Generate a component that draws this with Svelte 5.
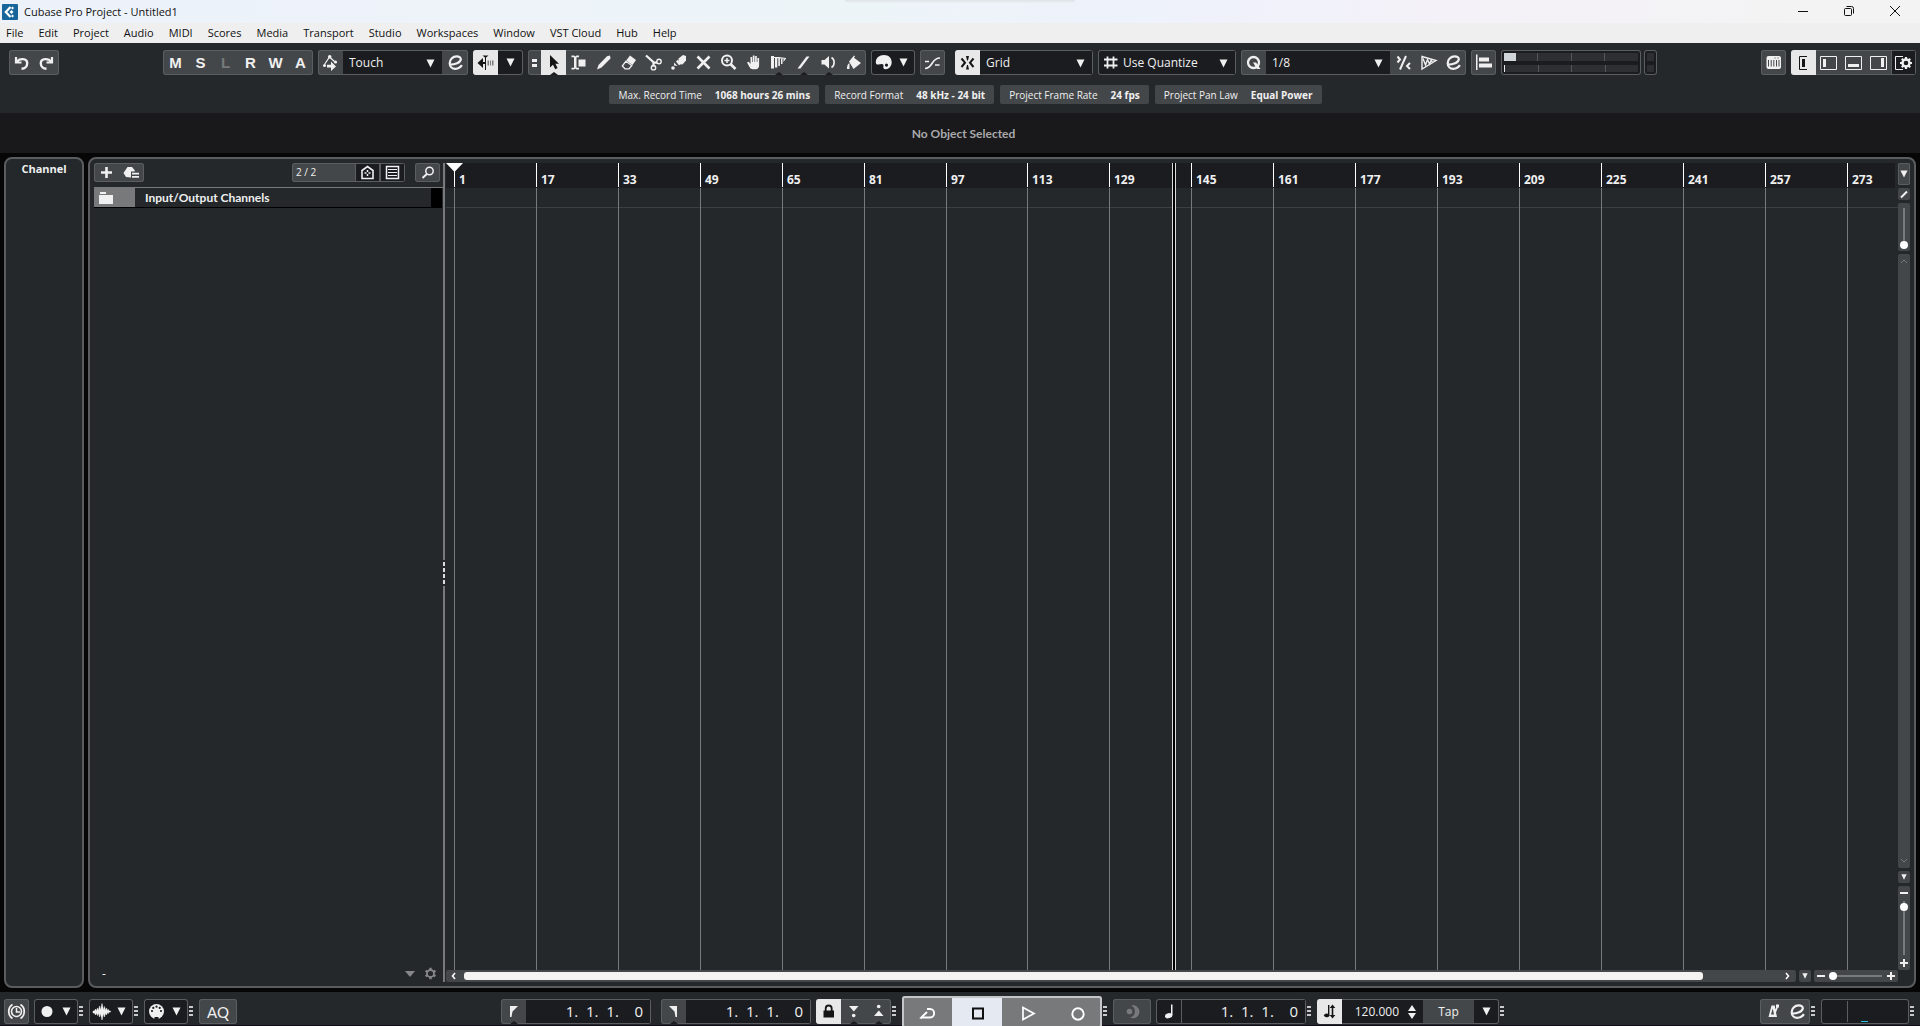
<script>
	const menus = ['File', 'Edit', 'Project', 'Audio', 'MIDI', 'Scores', 'Media', 'Transport', 'Studio', 'Workspaces', 'Window', 'VST Cloud', 'Hub', 'Help'];

	const tools = [
		{ icon: 'select', label: 'Object Selection', more: true },
		{ icon: 'range', label: 'Range Selection' },
		{ icon: 'draw', label: 'Draw' },
		{ icon: 'erase', label: 'Erase' },
		{ icon: 'split', label: 'Split' },
		{ icon: 'glue', label: 'Glue' },
		{ icon: 'mute', label: 'Mute' },
		{ icon: 'zoom', label: 'Zoom' },
		{ icon: 'hand', label: 'Hand' },
		{ icon: 'warp', label: 'Time Warp', more: true },
		{ icon: 'line', label: 'Line', more: true },
		{ icon: 'play', label: 'Play', more: true },
		{ icon: 'bucket', label: 'Color' }
	];

	const info = [
		['Max. Record Time', '1068 hours 26 mins'],
		['Record Format', '48 kHz - 24 bit'],
		['Project Frame Rate', '24 fps'],
		['Project Pan Law', 'Equal Power']
	];

	// all icons are drawn on a 25 x 25 grid
	const icons = {
		undo: '<path d="M7 7v5.500h5.500" fill="none" stroke="currentColor" stroke-width="2.200"/><path d="M7.800 12C10 8.400 18.200 7.600 18.200 13.400c0 3.400-2.700 5.200-5.700 5.300" fill="none" stroke="currentColor" stroke-width="2.400"/>',
		redo: '<g transform="translate(25 0) scale(-1 1)"><path d="M7 7v5.500h5.500" fill="none" stroke="currentColor" stroke-width="2.200"/><path d="M7.800 12C10 8.400 18.200 7.600 18.200 13.400c0 3.400-2.700 5.200-5.700 5.300" fill="none" stroke="currentColor" stroke-width="2.400"/></g>',
		auto: '<path d="M6.500 14.500 11.500 7 17 12" fill="none" stroke="currentColor" stroke-width="1.200"/><circle cx="6.500" cy="15.500" r="1.500"/><circle cx="11.700" cy="6.800" r="1.800"/><circle cx="17.500" cy="12" r="1.600"/><path d="M9 14.700h4v-3.200l5 5-5 4.500v-3.500H9z"/>',
		e: '<path d="M7 14.700c5-.2 10.300-2 10.800-5.200C18 7.300 16 6.300 13.700 6.300 9.500 6.300 6.700 9.700 6.700 13.200c0 3.400 2.300 5.600 5.700 5.600 2.700 0 5-1.300 6.500-3.600" fill="none" stroke="currentColor" stroke-width="2.200"/>',
		scroll: '<path d="M4.500 13 10 8v10zM9 12h3v2H9zM9.500 5.500h6L12.500 8z"/><path d="M12 6h1v14h-1z"/><path d="M14.500 10.500H16v5h-1.500zM17 10.500h1v5h-1zM19 10.500h1.500v5H19z" fill="#77797b"/>',
		select: '<path d="M9 5v12.500l3-2.800 2.200 4.600 2.400-1.200-2.200-4.400H18z"/>',
		range: '<path d="M5.500 5.500H8L9.300 6.500l1.200-1H13v1.700h-2.500v10.600H13v1.700h-2.500l-1.200-1-1.300 1H5.500v-1.700H8V7.200H5.500zM12.500 9.500h7v7h-7z"/>',
		draw: '<path d="M6 19.500 7.500 15 16 6.300 19 5.600 19.500 8.500 10.500 17.500z"/>',
		erase: '<path d="M14 5.500 20 10 16.500 15 10.200 10.600z"/><path d="M9.800 11.300 15.800 15.500 13 18.800H9L6.300 16z" fill="none" stroke="currentColor" stroke-width="1.300"/>',
		split: '<path d="M5 5.500 13 12.600h3M12.500 12.600v4" fill="none" stroke="currentColor" stroke-width="2.200"/><circle cx="18" cy="11.500" r="2.200" fill="none" stroke="currentColor" stroke-width="1.400"/><circle cx="12.500" cy="17.700" r="2.200" fill="none" stroke="currentColor" stroke-width="1.400"/>',
		glue: '<path d="M12.500 8.500 17 5l3 1v4.500l-3.500 4-3-.5z"/><path d="M12 9.500 10 11.500l3 3.700 2-1.200z"/><path d="M8 12.500 11.500 16l-3.500-.5z"/><circle cx="7" cy="18" r="1.800"/>',
		mute: '<path d="M6.500 6.500 18.500 18.500M18.500 6.500 6.500 18.500" stroke="currentColor" stroke-width="2.600"/>',
		zoom: '<circle cx="11" cy="10.500" r="5" fill="none" stroke="currentColor" stroke-width="2"/><path d="M11 8v5M8.500 10.500h5" stroke="currentColor" stroke-width="1.500"/><path d="M14.500 14 19.500 19" stroke="currentColor" stroke-width="2.600"/>',
		hand: '<path d="M8.500 17 6 12.500l1.700-.7 1.800 2.200V7h1.700v5h.6V5.500h1.700V12h.6V6h1.700v6h.6V8h1.700v7.500c0 2-1.300 3.700-3.200 3.700h-3.200c-1.500 0-2.400-.8-3-2z"/>',
		warp: '<path d="M5 6h3v12.500H5zM9 7h2.300v10.500H9zM12.300 7.800h1.600V16h-1.600zM15 8.200h1.500V14H15zM17.500 8.500H20L17.500 12zM5 6l15 2v1L5 7.500z"/>',
		line: '<path d="M6.500 18.500 15.500 6.500h3L9.500 18.500z"/>',
		play: '<path d="M5.500 10h3L13 6v12.500l-4.500-4h-3z"/><path d="M15.500 7.500c3.500 2 3.500 8 0 10" fill="none" stroke="currentColor" stroke-width="1.600"/>',
		bucket: '<path d="M8 11.500 13 5.500l1 .7-1 1.600 7 5.200-7.500 6z"/><path d="M8.500 13c-2 1-2.700 3.500-2.500 6h2.500z"/>',
		palette: '<path fill-rule="evenodd" d="M13 5c-4.800 0-8.200 3-8.200 7.200 0 1.700 1 2.600 2.700 2.300l3.200-.5c1.500 0 2 .9 1.700 2.200-.3 1.600.2 3 2 3 3.600 0 6.300-3.300 6.300-7C20.700 7.800 17.500 5 13 5zM15.500 13.500a1.600 1.600 0 1 1 0 3.200 1.600 1.600 0 0 1 0-3.200z"/>',
		fade: '<path d="M5 18.500C13 18.500 11 8 20 8" fill="none" stroke="currentColor" stroke-width="1.700"/><path d="M5 11.500h4M15 15h4.500" fill="none" stroke="currentColor" stroke-width="1.700"/>',
		snap: '<path d="M11 6h3l-1 4.500h-1zM11 19.500h3l-1-4.500h-1z"/><path d="M6.500 8.500 10 12.700 6.500 17M18.500 8.500 15 12.700l3.500 4.300" fill="none" stroke="currentColor" stroke-width="2"/>',
		grid: '<path d="M9.500 6.500v12M15.500 6.500v12M6 9.500h13.500M6 15.500h13.500" stroke="currentColor" stroke-width="1.800"/>',
		q: '<circle cx="12.500" cy="12.500" r="5.500" fill="none" stroke="currentColor" stroke-width="2.300"/><path d="M12 12.500h3L19.500 19h-3.500z"/>',
		iter: '<path d="M15 6 9 19.500" stroke="currentColor" stroke-width="2"/><path d="M6.500 6.500 9 9.500 6.500 12.500M19 13l-3 3 3 3" fill="none" stroke="currentColor" stroke-width="2"/>',
		warpq: '<path d="M6 6.500 20 10.500 6 19z" fill="none" stroke="currentColor" stroke-width="1.400"/><path d="M7 8.500 9.500 15l2-5.500 2 4.500 1.500-3.500 1.500 1.500" fill="none" stroke="currentColor" stroke-width="1.400"/>',
		align: '<path d="M5 4.500h1.500v15.500H5zM8 7.500h10v4H8zM8 13.500h13v4H8z"/>',
		keys: '<path fill-rule="evenodd" d="M7.500 6h10.500c1.200 0 2 .8 2 2v9c0 1.200-.8 2-2 2H7.500c-1.200 0-2-.8-2-2V8c0-1.200.8-2 2-2zM7 10v6.500h1V10zM9.700 10v6.500h1V10zM12.300 10v6.500h1V10zM15 10v6.500h1V10zM17.500 10v6.500h1V10zM13.500 7.500v1h1v-1zM16.500 7.500v1h1v-1z"/>',
		zoneInsp: '<path d="M16 6.500H8.500v13H16" fill="none" stroke="currentColor"/><path d="M11 9h3v8h-3z"/>',
		zoneLeft: '<path d="M4.500 6.500h16v13h-16z" fill="none" stroke="currentColor"/><path d="M7 9h3v8H7z"/>',
		zoneLow: '<path d="M4.500 6.500h16v13h-16z" fill="none" stroke="currentColor"/><path d="M7 14h11v3H7z"/>',
		zoneRight: '<path d="M4.500 6.500h16v13h-16z" fill="none" stroke="currentColor"/><path d="M15 8h3v9h-3z"/>',
		zoneSet: '<path d="M12 6.500H4.500v13H12" fill="none" stroke="currentColor"/><circle cx="15" cy="13" r="3.500" fill="none" stroke="currentColor" stroke-width="2.400"/><path d="M15 7v2.500M15 16.500V19M9 13h2.500M18.500 13H21M10.800 8.800l1.800 1.800M17.400 15.400l1.800 1.800M19.200 8.800l-1.800 1.800M12.600 15.400l-1.800 1.800" stroke="currentColor" stroke-width="2.200"/>',
		add: '<path d="M12.500 7v11M7 12.500h11" stroke="currentColor" stroke-width="2.600"/>',
		preset: '<path d="M8.500 7H13l2.700 3.200v1.300H12v6L7 17l-2.500-4z"/><path d="M13 12.700h7v1.800h-7zM13 16h7v1.800h-7z"/>',
		home: '<path d="M7 18.500V10.500L12.500 6.500 18 10.500v8z" fill="none" stroke="currentColor" stroke-width="1.600"/><path d="M12.500 10v2M12.500 14v2M9.500 13h2M13.500 13h2" stroke="currentColor" stroke-width="1.500"/>',
		list: '<path d="M6.500 6.500h12v12h-12z" fill="none" stroke="currentColor" stroke-width="1.500"/><path d="M8 9.500h9M8 12.500h9M8 15.500h9" stroke="currentColor" stroke-width="1.200"/>',
		find: '<circle cx="14.500" cy="11" r="3.700" fill="none" stroke="currentColor" stroke-width="1.500"/><path d="M11.800 14 7.500 18" stroke="currentColor" stroke-width="1.900"/>',
		clock: '<circle cx="12.500" cy="12.500" r="5" fill="none" stroke="currentColor" stroke-width="1.600"/><path d="M12.500 9v4H16" fill="none" stroke="currentColor" stroke-width="1.500"/><path d="M8.500 5.500c-5 3-5 11 0 14M16.500 5.500c5 3 5 11 0 14" fill="none" stroke="currentColor" stroke-width="1.800"/>',
		dot: '<circle cx="13" cy="12.500" r="5.500"/>',
		wave: '<path d="M4 12h1.500l1-2 1 2 1-3 1 2.500 1-4.500 1 4 1.500-6.500L14.500 11l1-3.500 1 4 1-2.500 1 2.500 1-1 .5 1.500h1.500v1H20l-.5 1.500-1-1-1 2.500-1-2-1 4-1-3.500-1.500 6.500-1.500-6.500-1 3.500-1-4-1 2.500-1-2.500-1 2-1-2H4z" stroke="currentColor" stroke-width=".5"/>',
		midi: '<circle cx="12.500" cy="12.500" r="7.500"/><g fill="#1b1c20"><circle cx="8" cy="12" r="1.100"/><circle cx="9.300" cy="8.900" r="1.100"/><circle cx="12.500" cy="7.700" r="1.100"/><circle cx="15.700" cy="8.900" r="1.100"/><circle cx="17" cy="12" r="1.100"/><path d="M10.500 18h4v2h-4z"/></g>',
		locL: '<path d="M9 7h8l-5.500 5.500-1 5.500H9z"/>',
		locR: '<path d="M16 7H8l5.500 5.500 1 5.500H16z"/>',
		lock: '<path d="M7.500 11.500h10.500v7H7.500z"/><path d="M9.700 12V9.500c0-4 6-4 6 0V12" fill="none" stroke="currentColor" stroke-width="1.800"/>',
		punchIn: '<path d="M8 7h9.500l-4.700 5.500z"/><circle cx="12.700" cy="16.500" r="1.800"/>',
		punchOut: '<path d="M8 17h9.500l-4.700-5.500z"/><circle cx="12.700" cy="7.500" r="1.800"/>',
		cycle: '<path d="M12 8h3c5.500 0 5.500 8.500 0 8.500H7" fill="none" stroke="currentColor" stroke-width="1.900"/><path d="M12 11 6 16.800l1 .5" fill="none" stroke="currentColor" stroke-width="1.900"/>',
		stop: '<path d="M8 7.500h10v10H8z" fill="none" stroke="currentColor" stroke-width="2"/>',
		start: '<path d="M8 6.500 19 12.500 8 18.500z" fill="none" stroke="currentColor" stroke-width="1.700"/>',
		rec: '<circle cx="13" cy="13" r="5.700" fill="none" stroke="currentColor" stroke-width="1.900"/>',
		moon: '<path fill-rule="evenodd" d="M11 6.500a6.500 6.500 0 1 1-1 12 6.300 6.300 0 0 0 1-12z"/><circle cx="9.500" cy="12.500" r="2.800"/>',
		note: '<path d="M15 5.500h1.500V16H15z"/><ellipse cx="12.700" cy="16.700" rx="3.800" ry="2.500" transform="rotate(-15 12.700 16.700)"/>',
		tempo: '<path d="M11 6h1.400v10H11z"/><ellipse cx="9.800" cy="16.300" rx="2.700" ry="1.900"/><path d="M15.500 5.500l2.800 3.500h-2v7h2l-2.800 3.500-2.800-3.500h2V9h-2z"/>',
		metro: '<path fill-rule="evenodd" d="M11.500 6.500h3.300l.5 4 1.700-4 1.500.5-2.500 6.500 1 4.500H8.500zM12.700 9.500 11 15.500h3z"/><path d="M16 5.500h3v3h-3z"/>',
		gear: '<circle cx="12.500" cy="12.500" r="3.500" fill="none" stroke="currentColor" stroke-width="1.800"/><path d="M12.500 6.800v2M12.500 16.200v2M7.600 9.700l1.700 1M15.700 14.300l1.700 1M7.600 15.300l1.700-1M15.700 10.700l1.700-1" stroke="currentColor" stroke-width="2.400"/>',
		folder: '<path d="M6 7h6v2H6zM5 10h14v9H5z"/>'
	};

	// the ruler shows one tick every 16 bars
	const ticks = Array.from({ length: 18 }, (_, i) => ({
		bar: 1 + i * 16,
		x: Math.floor(8.5 + i * 81.92)
	}));
	const cursorX = 726;

	const start = '1.\u00a0\u00a01.\u00a0\u00a01.\u00a0\u00a0\u00a0\u00a00';

	let activeTool = $state('select');
	let automation = $state('Touch');
	let snap = $state('Grid');
	let gridType = $state('Use Quantize');
	let quantize = $state('1/8');
	let left = $state(start);
	let right = $state(start);
	let position = $state(start);
	let tempo = $state('120.000');
</script>

{#snippet icon(name)}
	<svg class="icon" viewBox="0 0 25 25" fill="currentColor" aria-hidden="true">{@html icons[name]}</svg>
{/snippet}

{#snippet arrow()}
	<svg class="arrow" viewBox="0 0 9 9" fill="currentColor" aria-hidden="true"><path d="M0.500 0.500h8l-4 8z" /></svg>
{/snippet}

{#snippet btn(name, label)}
	<button class="cell" aria-label={label}>{@render icon(name)}</button>
{/snippet}

{#snippet handle()}
	<span class="handle"><i></i><i></i><i></i></span>
{/snippet}

<div class="app">
	<header class="titlebar">
		<svg class="logo" viewBox="0 0 16 16" aria-hidden="true">
			<rect width="16" height="16" rx="1" fill="#17659a" />
			<path d="M8.500 3 3.800 8l4.700 5" fill="none" stroke="#fff" stroke-width="2.200" />
			<path d="M9.500 6l2 2-2 2-2-2zM10.500 2.500l1.500 1.500-1.500 1.500L9 4zM10.500 10.500 12 12l-1.500 1.500L9 12z" fill="#fff" />
		</svg>
		<span class="title">Cubase Pro Project - Untitled1</span>
		<div class="window-btns">
			<button aria-label="Minimize"><svg viewBox="0 0 12 12"><path d="M1 6.500h10" /></svg></button>
			<button aria-label="Restore"><svg viewBox="0 0 12 12"><rect x="1.500" y="3.500" width="7" height="7" rx="1" /><path d="M3.500 1.500h5q2 0 2 2v5" /></svg></button>
			<button aria-label="Close"><svg viewBox="0 0 12 12"><path d="M1 1l10 10M11 1 1 11" /></svg></button>
		</div>
	</header>

	<nav class="menubar">
		{#each menus as menu}
			<button>{menu}</button>
		{/each}
	</nav>

	<div class="toolbar">
		<div class="group history">
			{@render btn('undo', 'Undo')}
			{@render btn('redo', 'Redo')}
		</div>
		<div class="group letters">
			{#each ['M', 'S', 'L', 'R', 'W', 'A'] as letter}
				<button class="cell" class:off={letter === 'L'}>{letter}</button>
			{/each}
		</div>
		<div class="group">
			{@render btn('auto', 'Automation panel')}
			<label class="pick automation">
				<select bind:value={automation} aria-label="Automation mode">
					<option>Touch</option>
					<option>Auto-Latch</option>
					<option>Cross-Over</option>
				</select>
				{@render arrow()}
			</label>
			{@render btn('e', 'Automation settings')}
		</div>
		<div class="group dark">
			<button class="cell on" aria-label="Auto-scroll">{@render icon('scroll')}</button>
			<button class="cell" aria-label="Auto-scroll settings">{@render arrow()}</button>
		</div>
		<div class="group">
			<span class="equals"><i></i><i></i></span>
			{#each tools as tool}
				<button
					class="cell"
					class:on={activeTool === tool.icon}
					class:more={tool.more}
					aria-label={tool.label}
					onclick={() => (activeTool = tool.icon)}
				>
					{@render icon(tool.icon)}
				</button>
			{/each}
		</div>
		<button class="group dark combo" aria-label="Color menu">{@render icon('palette')}{@render arrow()}</button>
		<div class="group">{@render btn('fade', 'Snap to zero crossing')}</div>
		<div class="group dark snap">
			<button class="cell on" aria-label="Snap">{@render icon('snap')}</button>
			<label class="pick">
				<select bind:value={snap} aria-label="Snap type">
					<option>Grid</option>
					<option>Events</option>
				</select>
				{@render arrow()}
			</label>
		</div>
		<div class="group dark gridtype">
			{@render icon('grid')}
			<label class="pick">
				<select bind:value={gridType} aria-label="Grid type">
					<option>Use Quantize</option>
					<option>Bar</option>
					<option>Beat</option>
				</select>
				{@render arrow()}
			</label>
		</div>
		<div class="group">
			{@render btn('q', 'Apply quantize')}
			<label class="pick quantize">
				<select bind:value={quantize} aria-label="Quantize preset">
					<option>1/8</option>
					<option>1/16</option>
				</select>
				{@render arrow()}
			</label>
			{@render btn('iter', 'Iterative quantize')}
			{@render btn('warpq', 'Audio warp quantize')}
			{@render btn('e', 'Quantize panel')}
		</div>
		<div class="group">{@render btn('align', 'Align')}</div>
		<div class="meters">
			<div class="group dark meter">
				<div class="bar"><b class="load"></b><i></i><i></i><i></i></div>
				<div class="bar"><b></b><i></i><i></i><i></i></div>
			</div>
			<div class="group dark meter small">
				<div class="bar"></div>
				<div class="bar"></div>
			</div>
		</div>
		<div class="zones">
			<div class="group">{@render btn('keys', 'On-screen keyboard')}</div>
			<div class="group">
				<button class="cell on" aria-label="Inspector">{@render icon('zoneInsp')}</button>
				{@render btn('zoneLeft', 'Left zone')}
				{@render btn('zoneLow', 'Lower zone')}
				{@render btn('zoneRight', 'Right zone')}
				<button class="cell sunk" aria-label="Window layout">{@render icon('zoneSet')}</button>
			</div>
		</div>
	</div>

	<div class="status">
		{#each info as [name, value]}
			<div class="chip"><span>{name}</span><b>{value}</b></div>
		{/each}
	</div>

	<div class="infoline">No Object Selected</div>

	<main class="workspace">
		<aside class="panel inspector"><h2>Channel</h2></aside>

		<section class="panel project">
			<div class="tracklist">
				<div class="track-head">
					<div class="group">
						{@render btn('add', 'Add track')}
						{@render btn('preset', 'Add track from preset')}
					</div>
					<div class="group filter">
						<span>2 / 2</span>
						<button class="cell sunk" aria-label="Track visibility">{@render icon('home')}</button>
						<button class="cell sunk" aria-label="Track types">{@render icon('list')}</button>
					</div>
					<div class="group">{@render btn('find', 'Find tracks')}</div>
				</div>
				<div class="track">
					<span class="folder">{@render icon('folder')}</span>
					<span class="name">Input/Output Channels</span>
					<span class="end"></span>
				</div>
				<div class="track-foot">
					<span class="dash">-</span>
					<button aria-label="Track list scale"><svg width="10" height="6" viewBox="0 0 10 6" fill="currentColor"><path d="M0 0h10L5 6z" /></svg></button>
					<button aria-label="Track list settings">{@render icon('gear')}</button>
				</div>
			</div>

			<div class="splitter"><span></span></div>

			<div class="arrange">
				<div class="timeline">
					<div class="ruler"></div>
					<div class="events"></div>
					{#each ticks as tick}
						<div class="tick" style="left: {tick.x}px"><span>{tick.bar}</span></div>
					{/each}
					<svg class="marker" viewBox="0 0 17 9"><path d="M0 0h17L8.500 9z" fill="#fff" /></svg>
					<div class="cursor" style="left: {cursorX}px"></div>
				</div>

				<div class="side">
					<button class="ruler-menu" aria-label="Ruler format">{@render arrow()}</button>
					<button class="square" aria-label="Edit ruler"><svg viewBox="0 0 12 12"><path d="M3 9.500 9 3.500" stroke="currentColor" stroke-width="2" /></svg></button>
					<div class="strip top"><input type="range" value="4" aria-label="Waveform zoom" /></div>
					<div class="strip vscroll">
						<svg viewBox="0 0 12 12"><path d="M3 8l3-3 3 3" /></svg>
						<svg viewBox="0 0 12 12"><path d="M3 4l3 3 3-3" /></svg>
					</div>
					<button class="square" aria-label="Vertical zoom presets">{@render arrow()}</button>
					<div class="strip vzoom">
						<button aria-label="Zoom out vertically"><svg viewBox="0 0 12 12"><path d="M2 7h8" /></svg></button>
						<input type="range" value="90" aria-label="Vertical zoom" />
						<button aria-label="Zoom in vertically"><svg viewBox="0 0 12 12"><path d="M2 5h8M6 1v8" /></svg></button>
					</div>
				</div>

				<div class="bottom">
					<div class="hscroll">
						<button aria-label="Scroll left"><svg viewBox="0 0 12 12"><path d="M6 3 3.500 6 6 9" /></svg></button>
						<div class="track-area"><div class="thumb"></div></div>
						<button aria-label="Scroll right"><svg viewBox="0 0 12 12"><path d="M5 3l2.500 3L5 9" /></svg></button>
					</div>
					<button class="square" aria-label="Horizontal zoom presets">{@render arrow()}</button>
					<div class="hzoom">
						<button aria-label="Zoom out"><svg viewBox="0 0 12 12"><path d="M2 6h8" /></svg></button>
						<input type="range" value="4" aria-label="Horizontal zoom" />
						<button aria-label="Zoom in"><svg viewBox="0 0 12 12"><path d="M2 6h8M6 2v8" /></svg></button>
					</div>
				</div>
			</div>
		</section>
	</main>

	<footer class="transport">
		<div class="sect first">
			<div class="group gap">{@render btn('clock', 'Constrain delay compensation')}</div>
			<button class="group dark combo" aria-label="Record mode">{@render icon('dot')}{@render arrow()}</button>
			{@render handle()}
			<button class="group dark combo" aria-label="Audio record mode">{@render icon('wave')}{@render arrow()}</button>
			{@render handle()}
			<button class="group dark combo" aria-label="MIDI record mode">{@render icon('midi')}{@render arrow()}</button>
			{@render handle()}
			<button class="group aq">AQ</button>
		</div>

		<div class="sect middle">
			<div class="group locator">
				<button class="cell more" aria-label="Go to left locator">{@render icon('locL')}</button>
				<input class="time" bind:value={left} aria-label="Left locator" />
			</div>
			<div class="group locator gap">
				<button class="cell more" aria-label="Go to right locator">{@render icon('locR')}</button>
				<input class="time" bind:value={right} aria-label="Right locator" />
			</div>
			<div class="group">
				<button class="cell on" aria-label="Lock punch points">{@render icon('lock')}</button>
				<button class="cell more" aria-label="Punch in">{@render icon('punchIn')}</button>
				<button class="cell more" aria-label="Punch out">{@render icon('punchOut')}</button>
			</div>
			{@render handle()}
			<div class="controls">
				<button aria-label="Cycle">{@render icon('cycle')}</button>
				<button class="active" aria-label="Stop">{@render icon('stop')}</button>
				<button aria-label="Start">{@render icon('start')}</button>
				<button aria-label="Record">{@render icon('rec')}</button>
			</div>
			{@render handle()}
			<button class="group aq dim gap" aria-label="Pre-roll">{@render icon('moon')}</button>
			<div class="group dark">
				<button class="cell ruled" aria-label="Time format">{@render icon('note')}</button>
				<input class="time" bind:value={position} aria-label="Position" />
			</div>
			{@render handle()}
			<div class="group dark">
				<button class="cell on" aria-label="Tempo track">{@render icon('tempo')}</button>
				<input class="tempo" bind:value={tempo} aria-label="Tempo" />
				<button class="spin" aria-label="Change tempo"><svg viewBox="0 0 8 16" fill="currentColor"><path d="M0 7h8L4 1zM0 9h8l-4 6z" /></svg></button>
				<button class="tap">Tap</button>
				<button class="cell" aria-label="Tap tempo options">{@render arrow()}</button>
			</div>
			{@render handle()}
		</div>

		<div class="sect">
			<div class="group">
				{@render btn('metro', 'Metronome')}
				{@render btn('e', 'Metronome setup')}
			</div>
			{@render handle()}
			<div class="group dark activity"><span></span><i></i></div>
			{@render handle()}
		</div>
	</footer>
</div>

<style>
	:global(body) {
		background: #060606;
	}

	.app {
		display: flex;
		flex-direction: column;
		height: 100vh;
		overflow: hidden;
		font-family: "Open Sans", "Noto Sans", sans-serif;
		font-size: 12px;
		color: #f0f0f0;
	}

	.app * {
		box-sizing: border-box;
	}

	button, input, select {
		margin: 0;
		padding: 0;
		border: 0;
		background: none;
		color: inherit;
		font: inherit;
		outline: 0;
	}

	svg {
		display: block;
		flex: none;
	}

	.titlebar {
		position: relative;
		display: flex;
		align-items: center;
		height: 23px;
		padding-left: 2px;
		gap: 6px;
		background: linear-gradient(90deg, #edf2fa 0%, #edf4f8 45%, #eef2fb 60%, #f4f1f8 75%, #f3f3f3 95%);
		color: #111;
		font-size: 11px;
	}

	.titlebar::after {
		content: "";
		position: absolute;
		top: 0;
		left: 44%;
		width: 12%;
		height: 3px;
		border-radius: 0 0 8px 8px;
		background: linear-gradient(#dfe3e7, #ebf1f6);
	}

	.logo {
		width: 16px;
		height: 16px;
	}

	.window-btns {
		display: flex;
		margin-left: auto;
		padding-right: 2px;
		align-self: flex-start;
	}

	.window-btns button {
		display: grid;
		place-items: center;
		width: 46px;
		height: 21px;
	}

	.window-btns svg {
		width: 12px;
		height: 12px;
		fill: none;
		stroke: #111;
	}

	.menubar {
		display: flex;
		gap: 3px;
		height: 20px;
		background: #efefef;
		color: #111;
		font-size: 11px;
	}

	.menubar button {
		padding: 0 6px 1px;
	}

	.toolbar {
		display: flex;
		gap: 5px;
		padding: 7px 4px 10px 9px;
		background: #24282b;
	}

	.group {
		display: flex;
		flex: none;
		height: 25px;
		border-radius: 3px;
		background: #44474a;
		box-shadow: inset 0 0 0 1px #5b5e61;
		overflow: hidden;
	}

	.group.dark {
		background: #1b1c20;
	}

	.cell {
		position: relative;
		display: grid;
		place-items: center;
		width: 25px;
		height: 100%;
	}

	.icon {
		width: 25px;
		height: 25px;
	}

	.arrow {
		width: 9px;
		height: 9px;
	}

	.cell.on {
		background: #e8e8e8;
		color: #151515;
	}

	.cell.sunk {
		background: #1b1c20;
		box-shadow: inset 0 0 0 1px #5b5e61;
	}

	.cell.off {
		color: #77797b;
	}

	.more::after {
		content: "";
		position: absolute;
		left: 9px;
		bottom: 0;
		border: 4px solid transparent;
		border-top: 0;
		border-bottom: 3px solid #1b1c20;
	}

	.history {
		margin-right: 99px;
	}

	.letters {
		font: bold 15px "Liberation Sans", sans-serif;
	}

	.pick {
		position: relative;
		display: flex;
		flex: 1;
		margin: 1px 1px 1px 0;
		background: #1b1c20;
	}

	.pick select {
		appearance: none;
		width: 100%;
		padding: 0 6px 1px;
	}

	.pick .arrow {
		position: absolute;
		right: 7px;
		top: 8px;
		pointer-events: none;
	}

	.pick.automation {
		flex: 0 0 99px;
	}

	.pick.quantize {
		flex: 0 0 124px;
	}

	.snap {
		width: 138px;
		margin-left: 5px;
	}

	.gridtype {
		width: 138px;
	}

	.gridtype select {
		padding: 0 0 1px;
	}

	.equals {
		display: flex;
		flex-direction: column;
		justify-content: center;
		align-items: center;
		gap: 2px;
		width: 13px;
	}

	.equals i {
		width: 5px;
		height: 3px;
		background: #f0f0f0;
	}

	.combo {
		align-items: center;
		width: 44px;
		gap: 3px;
	}

	.meters {
		display: flex;
		gap: 3px;
	}

	.meter {
		flex-direction: column;
		gap: 4px;
		width: 140px;
		padding: 3px;
	}

	.meter.small {
		width: 13px;
	}

	.bar {
		display: flex;
		flex: 1;
		justify-content: space-between;
		background: #2e2f33;
	}

	.bar i {
		width: 1px;
		background: #55575a;
	}

	.bar::after {
		content: "";
	}

	.bar b {
		width: 1px;
		background: #e8e8e8;
	}

	.bar b.load {
		width: 12px;
		margin-right: -12px;
		background: #d0d5d9;
	}

	.zones {
		display: flex;
		gap: 5px;
		margin-left: auto;
	}

	.status {
		display: flex;
		justify-content: center;
		gap: 6px;
		padding: 0 0 9px 11px;
		background: #24282b;
	}

	.chip {
		display: flex;
		align-items: center;
		gap: 13px;
		height: 19px;
		padding: 0 9px;
		border-radius: 2px;
		background: #44474a;
		font-size: 10px;
	}

	.infoline {
		display: grid;
		place-items: center;
		height: 40px;
		padding-left: 7px;
		background: #19191b;
		color: #a9aaac;
		font: bold 12px Lato, sans-serif;
	}

	.workspace {
		display: flex;
		flex: 1;
		min-height: 0;
		gap: 4px;
		padding: 4px;
	}

	.panel {
		border: 2px solid #5b5c5f;
		border-radius: 8px;
		background: #24282b;
	}

	.inspector {
		width: 80px;
	}

	h2 {
		margin: 2px 0;
		text-align: center;
		font-size: 11px;
		line-height: 16px;
	}

	.project {
		display: flex;
		flex: 1;
		min-width: 0;
		padding: 4px;
	}

	.tracklist {
		display: flex;
		flex-direction: column;
		width: 349px;
	}

	.track-head {
		display: flex;
		gap: 10px;
		height: 25px;
		padding-right: 3px;
		border-bottom: 1px solid #77797b;
	}

	.track-head .group {
		height: 19px;
	}

	.track-head .icon {
		margin: -3px 0;
	}

	.filter {
		margin-left: auto;
		font-size: 10px;
	}

	.filter span {
		width: 63px;
		padding-left: 4px;
		line-height: 19px;
	}

	.track {
		display: flex;
		height: 20px;
		margin-right: 1px;
		border-bottom: 1px solid #000;
	}

	.folder {
		width: 41px;
		height: 19px;
		background: #77797b;
		overflow: hidden;
	}

	.folder .icon {
		margin-top: -3px;
	}

	.name {
		padding-left: 10px;
		font: bold 12px Lato, sans-serif;
		line-height: 20px;
	}

	.end {
		width: 11px;
		margin-left: auto;
		background: #000;
	}

	.track-foot {
		display: flex;
		align-items: center;
		gap: 3px;
		height: 17px;
		margin-top: auto;
		padding-left: 8px;
		color: #85878a;
	}

	.dash {
		margin-right: auto;
		color: #f0f0f0;
	}

	.splitter {
		display: grid;
		place-items: center;
		width: 2px;
		margin-right: 1px;
		background: #77797b;
	}

	.splitter span {
		width: 2px;
		height: 26px;
		background: repeating-linear-gradient(#24282b 0 2px, #dcdcdc 2px 6px);
	}

	.arrange {
		display: grid;
		flex: 1;
		grid-template-columns: 1fr 12px;
		grid-template-rows: 1fr 12px;
		min-width: 0;
	}

	.timeline {
		position: relative;
		overflow: hidden;
	}

	.ruler {
		height: 25px;
		margin-right: 3px;
		background: #1b1c20;
	}

	.events {
		height: 20px;
		border-bottom: 1px solid #3d4043;
	}

	.tick {
		position: absolute;
		top: 0;
		bottom: 0;
		width: 1px;
		background: linear-gradient(#fff 24px, #24282b 24px, #24282b 25px, #77797b 25px);
	}

	.tick span {
		position: absolute;
		top: 9px;
		left: 5px;
		font-weight: bold;
		line-height: 16px;
	}

	.marker {
		position: absolute;
		top: 0;
		left: 0;
		width: 17px;
		height: 9px;
	}

	.cursor {
		position: absolute;
		top: 0;
		bottom: 0;
		width: 4px;
		border: solid #dcdcdc;
		border-width: 0 1px;
		background: #000;
	}

	.side {
		display: flex;
		flex-direction: column;
		gap: 3px;
	}

	.ruler-menu {
		display: grid;
		place-items: center;
		height: 22px;
		border-radius: 2px;
		background: #44474a;
		box-shadow: inset 0 0 0 1px #5b5e61;
	}

	.ruler-menu .arrow {
		width: 8px;
		height: 8px;
	}

	.square {
		display: grid;
		place-items: center;
		width: 12px;
		height: 12px;
		border-radius: 2px;
		background: #44474a;
	}

	.square svg {
		max-width: 12px;
	}

	.square .arrow {
		width: 6px;
		height: 6px;
	}

	.strip, .hscroll, .hzoom {
		display: flex;
		align-items: center;
		border-radius: 2px;
		background: #44474a;
	}

	.strip {
		flex-direction: column;
	}

	.strip svg, .hscroll svg, .hzoom svg {
		width: 12px;
		height: 12px;
		fill: none;
		stroke: currentColor;
		stroke-width: 2;
	}

	.top {
		height: 48px;
		padding: 2px 0 0;
	}

	.vscroll {
		flex: 1;
		justify-content: space-between;
		padding: 1px 0;
		color: #77797b;
	}

	.strip.vscroll svg {
		stroke-width: 1;
	}

	.hscroll svg {
		stroke-width: 1.5;
	}

	.vzoom {
		height: 84px;
	}

	.strip input, .hzoom input {
		appearance: none;
		flex: 1;
		min-height: 0;
		min-width: 0;
	}

	.strip input {
		width: 12px;
		writing-mode: vertical-lr;
		direction: rtl;
		background: linear-gradient(#77797b, #77797b) center / 2px calc(100% - 6px) no-repeat;
	}

	.hzoom input {
		height: 12px;
		background: linear-gradient(#77797b, #77797b) center / calc(100% - 6px) 2px no-repeat;
	}

	.strip input::-webkit-slider-thumb, .hzoom input::-webkit-slider-thumb {
		appearance: none;
		width: 8px;
		height: 8px;
		border-radius: 50%;
		background: #fff;
	}

	.strip button, .hzoom button, .hscroll button {
		width: 12px;
		height: 12px;
	}

	.bottom {
		display: flex;
		grid-column: 1;
		gap: 3px;
	}

	.hscroll {
		flex: 1;
		padding: 0 3px;
		color: #fff;
	}

	.track-area {
		flex: 1;
		padding: 0 78px 0 3px;
	}

	.thumb {
		height: 8px;
		border-radius: 3px;
		background: #f4f3f2;
	}

	.hzoom {
		width: 84px;
		padding: 0 1px;
	}

	.transport {
		display: flex;
		height: 34px;
		background: #24282b;
		border-bottom: 1px solid #120d16;
	}

	.sect {
		display: flex;
		padding-top: 7px;
	}

	.first {
		padding-left: 4px;
	}

	.gap {
		margin-right: 5px;
	}

	.middle {
		margin: 0 auto;
		padding-left: 14px;
	}

	.middle > .locator:first-child {
		margin-right: 10px;
	}

	.handle {
		display: flex;
		flex-direction: column;
		align-items: flex-start;
		gap: 2px;
		width: 11px;
		padding: 7px 0 0 1px;
	}

	.handle i {
		width: 4px;
		height: 2px;
		background: #c9cacb;
	}

	.aq {
		justify-content: center;
		align-items: center;
		width: 38px;
		font: 15px Lato, sans-serif;
	}

	.dim {
		color: #77797b;
	}

	.time {
		width: 124px;
		margin: 1px 1px 1px 0;
		padding: 0 7px 2px 0;
		background: #1b1c20;
		font-size: 15px;
		text-align: right;
	}

	.ruled {
		box-shadow: 1px 0 #5b5e61;
	}

	.controls {
		display: flex;
		width: 200px;
		height: 32px;
		margin-top: -3px;
		padding-top: 2px;
		border-radius: 3px;
		background: #77797b;
		box-shadow: inset 0 0 0 2px #c5c6c8;
	}

	.controls button {
		display: grid;
		place-items: center;
		flex: 1;
		color: #fff;
	}

	.controls .active {
		background: #e4e9f2;
		color: #111;
	}

	.tempo {
		width: 58px;
		padding: 0 1px 1px 0;
		text-align: right;
	}

	.spin {
		display: grid;
		place-items: center;
		width: 23px;
	}

	.spin svg {
		width: 8px;
		height: 16px;
	}

	.tap {
		width: 51px;
		margin: 1px 0;
		padding-bottom: 1px;
		background: #44474a;
	}

	.activity {
		width: 88px;
	}

	.activity span {
		width: 27px;
		margin: 2px 0;
		border-right: 1px solid #5b5e61;
	}

	.activity i {
		align-self: flex-end;
		width: 7px;
		height: 1px;
		margin: 0 0 2px 13px;
		background: #25c3dc;
	}
</style>
